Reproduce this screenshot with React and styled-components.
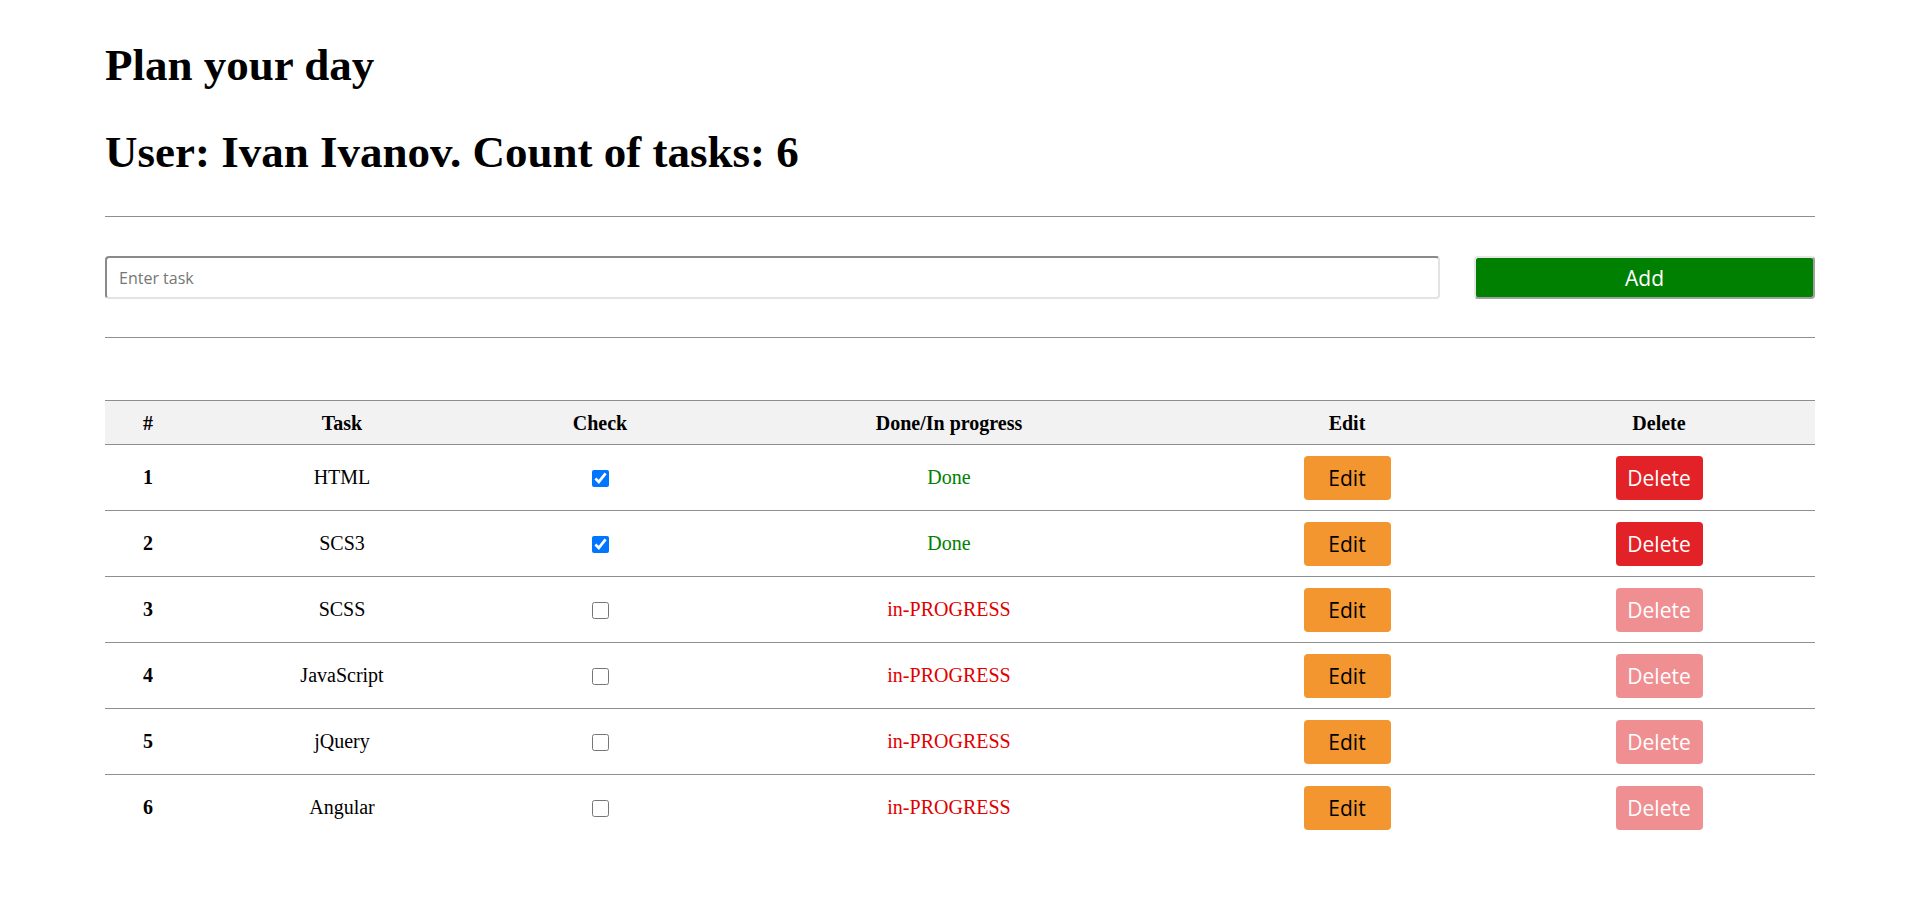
import React, { useState } from "react";
import styled, { createGlobalStyle } from "styled-components";

const GlobalStyle = createGlobalStyle`
  body {
    margin: 0;
    background: #fff;
    font-family: "Liberation Serif", "Times New Roman", serif;
    color: #000;
  }
`;

const Page = styled.div`
  width: 1710px;
  margin: 0 auto;
  padding-top: 40px;
`;

const Title = styled.h1`
  margin: 0 0 ${(p) => p.$gap || 0}px;
  font-size: 45px;
  line-height: 50px;
  font-weight: bold;
`;

const Divider = styled.div`
  border-top: 1px solid #8e8e8e;
  margin-top: ${(p) => p.$top}px;
`;

const Form = styled.form`
  display: flex;
  gap: 34px;
  margin-top: 39px;
`;

const TaskInput = styled.input`
  flex: 1;
  height: 43px;
  box-sizing: border-box;
  padding: 0 12px;
  border-width: 2px;
  border-style: solid;
  border-color: #8a8a8a #e3e3e3 #e3e3e3 #8a8a8a;
  border-radius: 4px;
  font-family: "Open Sans", sans-serif;
  font-size: 16px;
  outline: none;
  &::placeholder {
    color: #767676;
  }
`;

const AddButton = styled.button`
  width: 341px;
  height: 43px;
  box-sizing: border-box;
  background: #008000;
  color: #fff;
  border-width: 2px;
  border-style: solid;
  border-color: #e6e6e6 #a0a0a0 #a0a0a0 #e6e6e6;
  border-radius: 4px;
  font-family: "Open Sans", sans-serif;
  font-size: 21px;
  cursor: pointer;
`;

const Table = styled.table`
  width: 100%;
  margin-top: 62px;
  border-collapse: collapse;
  table-layout: fixed;
  font-size: 20px;
`;

const HeadRow = styled.tr`
  background: #f2f2f2;
  border-top: 1px solid #8e8e8e;
  border-bottom: 1px solid #8e8e8e;
`;

const Th = styled.th`
  height: 41px;
  padding: 2px 0 0;
  font-size: 20px;
  font-weight: bold;
  text-align: center;
`;

const Row = styled.tr`
  border-bottom: ${(p) => (p.$last ? "none" : "1px solid #8e8e8e")};
`;

const Td = styled.td`
  height: 65px;
  padding: 0;
  text-align: center;
  vertical-align: middle;
  font-weight: ${(p) => (p.$bold ? "bold" : "normal")};
`;

const Check = styled.input`
  width: 17px;
  height: 17px;
  margin: 0 0 2px;
  vertical-align: middle;
`;

const Status = styled.span`
  color: ${(p) => (p.$done ? "#008000" : "#e00000")};
`;

const ActionButton = styled.button`
  width: 87px;
  height: 44px;
  border: none;
  border-radius: 4px;
  font-family: "Open Sans", sans-serif;
  font-size: 21px;
  vertical-align: middle;
  background: ${(p) => (p.$variant === "edit" ? "#f4962f" : "#e22227")};
  color: ${(p) => (p.$variant === "edit" ? "#000" : "#fff")};
  cursor: pointer;
  &:disabled {
    opacity: 0.5;
    cursor: default;
  }
`;

const initialTasks = [
  { id: 1, title: "HTML", done: true },
  { id: 2, title: "SCS3", done: true },
  { id: 3, title: "SCSS", done: false },
  { id: 4, title: "JavaScript", done: false },
  { id: 5, title: "jQuery", done: false },
  { id: 6, title: "Angular", done: false },
];

const widths = [86, 302, 214, 484, 312, 312];

export default function App() {
  const [tasks, setTasks] = useState(initialTasks);
  const [text, setText] = useState("");

  const toggle = (id) =>
    setTasks(tasks.map((t) => (t.id === id ? { ...t, done: !t.done } : t)));

  return (
    <>
      <GlobalStyle />
      <Page>
        <Title $gap={37}>Plan your day</Title>
        <Title>User: Ivan Ivanov. Count of tasks: {tasks.length}</Title>
        <Divider $top={39} />
        <Form onSubmit={(e) => e.preventDefault()}>
          <TaskInput
            placeholder="Enter task"
            value={text}
            onChange={(e) => setText(e.target.value)}
          />
          <AddButton type="submit">Add</AddButton>
        </Form>
        <Divider $top={38} />
        <Table>
          <colgroup>
            {widths.map((w, i) => (
              <col key={i} style={{ width: w }} />
            ))}
          </colgroup>
          <thead>
            <HeadRow>
              <Th>#</Th>
              <Th>Task</Th>
              <Th>Check</Th>
              <Th>Done/In progress</Th>
              <Th>Edit</Th>
              <Th>Delete</Th>
            </HeadRow>
          </thead>
          <tbody>
            {tasks.map((t, i) => (
              <Row key={t.id} $last={i === tasks.length - 1}>
                <Td $bold>{t.id}</Td>
                <Td>{t.title}</Td>
                <Td>
                  <Check
                    type="checkbox"
                    checked={t.done}
                    onChange={() => toggle(t.id)}
                  />
                </Td>
                <Td>
                  <Status $done={t.done}>{t.done ? "Done" : "in-PROGRESS"}</Status>
                </Td>
                <Td>
                  <ActionButton $variant="edit">Edit</ActionButton>
                </Td>
                <Td>
                  <ActionButton $variant="delete" disabled={!t.done}>
                    Delete
                  </ActionButton>
                </Td>
              </Row>
            ))}
          </tbody>
        </Table>
      </Page>
    </>
  );
}
